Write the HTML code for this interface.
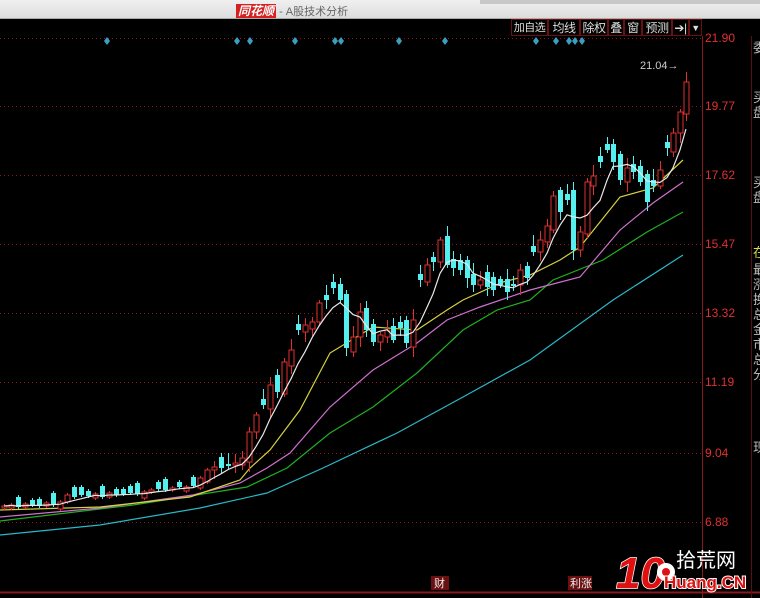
<!DOCTYPE html>
<html><head><meta charset="utf-8">
<style>
html,body{margin:0;padding:0;background:#000;width:760px;height:598px;overflow:hidden;font-family:"Liberation Sans","Noto Sans CJK SC",sans-serif}
#top{position:absolute;left:0;top:0;width:760px;height:18px;background:linear-gradient(#f0f0f0,#dcdcdc);border-bottom:1px solid #aaa}
#top .dark{position:absolute;left:480px;top:0;width:280px;height:4px;background:#c8c8c8}
#title{position:absolute;left:236px;top:2px;font-size:11px;color:#666;white-space:nowrap}
#title b{color:#fff;background:#d42020;font-style:italic;padding:0 2px;font-size:12px}
.btn{position:absolute;top:19px;height:17px;border:1px solid #6a1010;color:#ddd;font-size:12px;line-height:16px;text-align:center;box-sizing:border-box;white-space:nowrap;overflow:hidden;letter-spacing:-0.5px}
.lbl{position:absolute;left:705px;color:#e03030;font-size:12px}
.rp{position:absolute;left:753px;color:#bbb;font-size:13px;width:10px;line-height:15px}
</style></head><body>
<div id="top"><div class="dark"></div><div id="title"><b>同花顺</b> - A股技术分析</div></div>
<div class="btn" style="left:511px;width:37px;font-size:11px">加自选</div>
<div class="btn" style="left:548px;width:32px">均线</div>
<div class="btn" style="left:580px;width:28px">除权</div>
<div class="btn" style="left:608px;width:16px">叠</div>
<div class="btn" style="left:624px;width:18px">窗</div>
<div class="btn" style="left:642px;width:30px">预测</div>
<div class="btn" style="left:672px;width:17px">➔|</div>
<div class="btn" style="left:689px;width:13px;font-size:9px">▼</div>
<svg id="ch" width="760" height="598" style="position:absolute;left:0;top:0" xmlns="http://www.w3.org/2000/svg">
<g stroke="#8a1a1a" stroke-dasharray="1,3" stroke-width="1">
<line x1="0" y1="38.5" x2="702" y2="38.5"/><line x1="0" y1="106.5" x2="702" y2="106.5"/>
<line x1="0" y1="175.5" x2="702" y2="175.5"/><line x1="0" y1="244.5" x2="702" y2="244.5"/>
<line x1="0" y1="313.5" x2="702" y2="313.5"/><line x1="0" y1="382.5" x2="702" y2="382.5"/>
<line x1="0" y1="453.5" x2="702" y2="453.5"/><line x1="0" y1="522.5" x2="702" y2="522.5"/>
</g>
<line x1="702.5" y1="36" x2="702.5" y2="598" stroke="#8a1a1a"/>
<line x1="0" y1="592.5" x2="760" y2="592.5" stroke="#8a1a1a" stroke-width="2"/>
<line x1="751.5" y1="36" x2="751.5" y2="598" stroke="#5a1010"/>
<g fill="#3aa0c0">
<path d="M107 37l3 4-3 4-3-4z"/><path d="M237 37l3 4-3 4-3-4z"/><path d="M250 37l3 4-3 4-3-4z"/><path d="M295 37l3 4-3 4-3-4z"/><path d="M335 37l3 4-3 4-3-4z"/><path d="M341 37l3 4-3 4-3-4z"/><path d="M399 37l3 4-3 4-3-4z"/><path d="M445 37l3 4-3 4-3-4z"/><path d="M536 37l3 4-3 4-3-4z"/><path d="M556 37l3 4-3 4-3-4z"/><path d="M569 37l3 4-3 4-3-4z"/><path d="M575 37l3 4-3 4-3-4z"/><path d="M582 37l3 4-3 4-3-4z"/>
</g>
<g fill="none" stroke-width="1.2">
<polyline stroke="#2ab8c8" points="0,535 100,525 200,508 267,493 323,468 397,433 463,397 530,360 613,300 683,255"/>
<polyline stroke="#20b020" points="0,521 133,505 247,487 287,468 330,433 373,407 417,373 463,330 497,310 530,300 553,280 603,260 647,232 683,212"/>
<polyline stroke="#d070d0" points="0,517 100,508 193,495 240,483 267,468 290,453 330,407 373,370 417,343 447,320 480,307 530,290 580,277 620,230 653,203 683,182"/>
<polyline stroke="#d8d040" points="0,510 100,507 190,497 240,480 250,468 270,450 300,410 330,353 373,327 417,330 447,310 463,300 503,282 530,275 560,260 580,247 620,197 653,188 683,160"/>
</g>
<g id="cd"></g>
<polyline id="ma5" fill="none" stroke="#e8e8e8" stroke-width="1.2" points=""/>
<text x="640" y="69" fill="#ccc" font-size="11" font-family="Liberation Sans">21.04→</text>
<rect x="431" y="576" width="18" height="14" fill="#6a1010"/><text x="434" y="587" fill="#eee" font-size="11">财</text>
<rect x="568" y="576" width="24" height="14" fill="#6a1010"/><text x="570" y="587" fill="#eee" font-size="11">利涨</text>
<text x="616" y="588" fill="#e01010" stroke="#fff" stroke-width="1.5" paint-order="stroke" font-size="44" font-weight="bold" font-style="italic" font-family="Liberation Sans">10</text>
<circle cx="666" cy="572" r="9" fill="#fff"/><circle cx="666" cy="572" r="4" fill="#e01010"/>
<text x="676" y="567" fill="#fff" font-size="20" font-family="Noto Sans CJK SC,sans-serif">拾荒网</text>
<text x="664" y="588" fill="#e01010" stroke="#fff" stroke-width="2" paint-order="stroke" font-size="17" font-weight="bold" font-family="Liberation Sans">Huang.CN</text>
</svg>
<div class="lbl" style="top:31px">21.90</div>
<div class="lbl" style="top:99px">19.77</div>
<div class="lbl" style="top:168px">17.62</div>
<div class="lbl" style="top:237px">15.47</div>
<div class="lbl" style="top:306px">13.32</div>
<div class="lbl" style="top:375px">11.19</div>
<div class="lbl" style="top:446px">9.04</div>
<div class="lbl" style="top:515px">6.88</div>
<div class="rp" style="top:40px">委</div>
<div class="rp" style="top:90px">买<br>盘</div>
<div class="rp" style="top:175px">买<br>盘</div>
<div class="rp" style="top:245px;color:#dd4">在</div>
<div class="rp" style="top:262px">最<br>涨<br>换<br>总<br>金<br>市<br>总<br>分</div>
<div class="rp" style="top:440px">现</div>
<script>
var C=[[4,506],[11,505],[18,507],[25,504],[32,505],[39,506],[46,503],[53,505],[60,502],[67,495],[74,497],[81,495],[88,496],[95,494],[102,497],[109,493],[116,495],[123,494],[130,493],[137,494],[144,492],[151,490],[158,489],[165,490],[172,488],[179,487],[186,487],[193,486],[200,478],[207,470],[214,467],[221,468],[228,465],[235,463],[242,458],[249,432],[256,415],[263,405],[270,385],[277,392],[284,362],[291,350],[298,330],[305,325],[312,322],[319,303],[326,300],[333,288],[340,300],[346,348],[353,337],[360,312],[366,330],[373,342],[380,335],[387,330],[393,340],[400,328],[406,343],[413,320],[420,280],[427,265],[433,262],[440,240],[447,265],[453,268],[460,270],[467,278],[473,285],[480,280],[487,287],[493,290],[500,285],[507,292],[513,285],[520,270],[527,278],[533,252],[540,240],[547,226],[553,196],[560,212],[567,200],[573,250],[580,232],[587,182],[593,176],[600,162],[607,150],[613,162],[620,180],[627,168],[633,172],[640,182],[647,202],[653,186],[660,170],[667,148],[673,133],[680,112],[686,82]];
var g=document.getElementById('cd'),s='',p=[],prev=507;
for(var i=0;i<C.length;i++){var x=C[i][0],c=C[i][1];var up=(i%5==2||i%7==4)?false:(c<=prev);
var o=up?prev+ (i%3)*2:prev-(i%4)*2-4; if(!up&&o>c)o=c-6; if(up&&o<c)o=c+4;
var t=Math.min(o,c),b=Math.max(o,c);if(b-t<2)b=t+2;var ht=t-3-(i*7%9),lb=b+3+(i*5%8);
if(i<30){ht=t-2;lb=b+2;}
if(up){s+='<line x1="'+(x+.5)+'" y1="'+ht+'" x2="'+(x+.5)+'" y2="'+t+'" stroke="#e03030"/><line x1="'+(x+.5)+'" y1="'+b+'" x2="'+(x+.5)+'" y2="'+lb+'" stroke="#e03030"/><rect x="'+(x-2)+'" y="'+t+'" width="5" height="'+(b-t)+'" fill="#000" stroke="#e03030"/>';}
else{s+='<line x1="'+(x+.5)+'" y1="'+ht+'" x2="'+(x+.5)+'" y2="'+lb+'" stroke="#54f0f0"/><rect x="'+(x-2)+'" y="'+t+'" width="5" height="'+(b-t)+'" fill="#54f0f0"/>';}
prev=c;}
g.innerHTML=s;
for(var i=0;i<C.length;i++){var a=0,n=0;for(var j=Math.max(0,i-4);j<=i;j++){a+=C[j][1];n++;}p.push(C[i][0]+','+(a/n).toFixed(1));}
document.getElementById('ma5').setAttribute('points',p.join(' '));
</script>
</body></html>
